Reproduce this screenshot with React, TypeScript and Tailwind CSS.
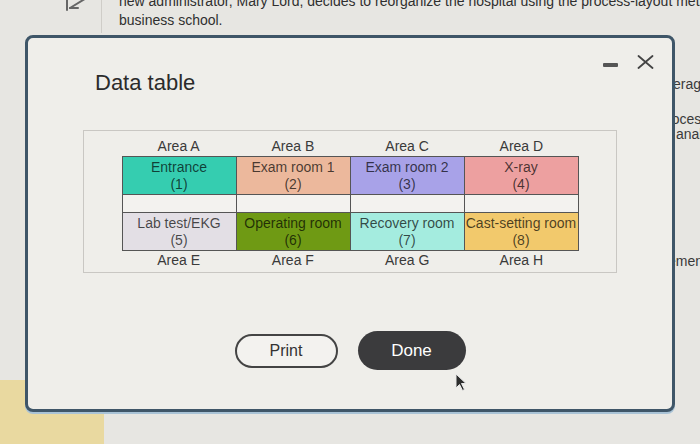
import React from 'react';

const areasTop = ['Area A', 'Area B', 'Area C', 'Area D'];
const areasBottom = ['Area E', 'Area F', 'Area G', 'Area H'];

const topRooms = [
  { name: 'Entrance', num: '(1)', bg: 'bg-[#35cdb0]' },
  { name: 'Exam room 1', num: '(2)', bg: 'bg-[#ecb89c]' },
  { name: 'Exam room 2', num: '(3)', bg: 'bg-[#a8a2e8]' },
  { name: 'X-ray', num: '(4)', bg: 'bg-[#eda0a0]' },
];

const bottomRooms = [
  { name: 'Lab test/EKG', num: '(5)', bg: 'bg-[#e3dfe5]' },
  { name: 'Operating room', num: '(6)', bg: 'bg-[#6f9a14]' },
  { name: 'Recovery room', num: '(7)', bg: 'bg-[#a4ecdf]' },
  { name: 'Cast-setting room', num: '(8)', bg: 'bg-[#f2c96c]' },
];

const RoomCell = ({ name, num, bg }: { name: string; num: string; bg: string }) => (
  <div className={`${bg} h-[37px] flex flex-col items-center justify-center text-[14px] leading-[17px] text-black/70 whitespace-nowrap`}>
    <span>{name}</span>
    <span>{num}</span>
  </div>
);

const AreaLabels = ({ labels }: { labels: string[] }) => (
  <div className="grid grid-cols-4 w-[457px] mx-auto h-[19px] text-[14px] leading-[19px] text-[#3a3a3a]">
    {labels.map((l) => (
      <div key={l} className="text-center">
        {l}
      </div>
    ))}
  </div>
);

const App = () => {
  return (
    <div className="relative w-[700px] h-[444px] overflow-hidden bg-[#e7e6e2] font-['Liberation_Sans',Arial,sans-serif] text-[#333]">
      {/* page behind the dialog */}
      <div className="flex flex-col h-full">
        <div className="flex h-[33px] shrink-0">
          <div className="w-[102px] shrink-0 border-r border-[#cfcdc8]">
            <svg width="102" height="33" viewBox="0 0 102 33" fill="none" stroke="#666" strokeWidth="2" strokeLinecap="round">
              <path d="M67 -6 V10" />
              <path d="M88 -3 L70 8" />
              <path d="M70 8 H78" />
            </svg>
          </div>
          <div className="pl-[17px] mt-[-8px] text-[14px] leading-[19px] whitespace-nowrap text-[#2f2f2f]">
            <div>new administrator, Mary Lord, decides to reorganize the hospital using the process-layout method</div>
            <div>business school.</div>
          </div>
        </div>
        <div className="flex flex-1">
          <div className="flex-1" />
          <div className="w-[36px] shrink-0 pt-[44px] text-[14px] leading-[15px] whitespace-nowrap text-[#3a3a3a]">
            <div className="pl-[2px]">verage</div>
            <div className="pl-[3px] mt-[20px]">roces</div>
            <div className="pl-[12px]">analy</div>
            <div className="pl-[4px] mt-[112px]">ement</div>
          </div>
        </div>
        <div className="w-[104px] h-[64px] shrink-0 bg-[#e9d9a0]" />
      </div>

      {/* dialog */}
      <div className="absolute left-[25px] top-[35px] w-[650px] h-[377px] flex flex-col rounded-[8px] border-[3px] border-[#3f5668] bg-[#efeeea] shadow-[0_2px_0_#a9c3d6]">
        <div className="flex items-start">
          <h2 className="pl-[67px] pt-[31px] text-[22px] leading-[28px] text-[#2b2b2b]">Data table</h2>
          <div className="ml-auto flex items-start gap-[19px] pt-[17px] pr-[18px]">
            <div className="mt-[8px] w-[15px] h-[4px] rounded-[1px] bg-[#555]" />
            <svg width="17" height="14" viewBox="0 0 17 14" fill="none" stroke="#444" strokeWidth="1.8" strokeLinecap="round">
              <path d="M1.5 1 L15.5 13" />
              <path d="M15.5 1 L1.5 13" />
            </svg>
          </div>
        </div>

        <div className="mt-[33px] mx-[55px] border border-[#c9c7c3] pt-[6px] pb-[2px]">
          <AreaLabels labels={areasTop} />
          <div className="grid grid-cols-4 gap-px w-[457px] mx-auto bg-[#555] border border-[#555]">
            {topRooms.map((r) => (
              <RoomCell key={r.name} {...r} />
            ))}
            {[0, 1, 2, 3].map((i) => (
              <div key={i} className="h-[17px] bg-[#f3f2ef]" />
            ))}
            {bottomRooms.map((r) => (
              <RoomCell key={r.name} {...r} />
            ))}
          </div>
          <AreaLabels labels={areasBottom} />
        </div>

        <div className="mt-[58px] flex justify-center items-center gap-5">
          <button className="w-[103px] h-[34px] rounded-full border-2 border-[#444] bg-[#f3f2ef] text-[16px] text-[#333]">
            Print
          </button>
          <button className="w-[108px] h-[39px] rounded-full bg-[#3b3b3d] text-[17px] text-white">
            Done
          </button>
        </div>
      </div>

      {/* mouse pointer */}
      <svg className="absolute left-[455px] top-[373px]" width="13" height="19" viewBox="0 0 13 19">
        <path d="M1 1 L1 15 L4.5 11.5 L7.5 17.5 L9.5 16.5 L6.5 10.5 L11 10.5 Z" fill="#2d2d2d" stroke="#e8e8e8" strokeWidth="1" />
      </svg>
    </div>
  );
};

export default App;
